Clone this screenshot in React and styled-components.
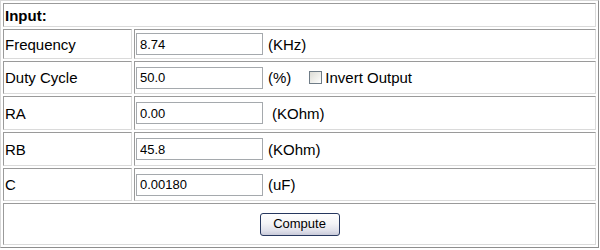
import React from "react";
import styled, { createGlobalStyle } from "styled-components";

const Global = createGlobalStyle`
  html, body { margin: 0; padding: 0; background: #ffffff; }
  body { font-family: "Liberation Sans", Arial, sans-serif; }
`;

const Table = styled.table`
  border-collapse: separate;
  border-spacing: 2px;
  width: 599px;
  box-sizing: border-box;
  border-style: solid;
  border-width: 1px;
  border-color: #d8d8d8 #8e8e8e #8e8e8e #d8d8d8;
  font-family: "Liberation Sans", Arial, sans-serif;
  font-size: 15px;
  color: #000;
`;

const Row = styled.tr`
  height: ${(p) => p.$h}px;
`;

const Cell = styled.td`
  box-sizing: border-box;
  padding: 1px;
  border-style: solid;
  border-width: 1px;
  border-color: #9a9a9a #dadada #dadada #9a9a9a;
  vertical-align: middle;
  white-space: nowrap;
`;

const HeaderCell = styled(Cell)`
  font-weight: bold;
`;

const LabelCell = styled(Cell)`
  width: 129px;
`;

const CenterCell = styled(Cell)`
  text-align: center;
`;

const ValueLine = styled.div`
  display: flex;
  align-items: center;
`;

const Field = styled.input`
  box-sizing: border-box;
  width: 127px;
  height: 22px;
  margin: 0;
  padding: 1px 3px;
  border: 1px solid #a5a9ad;
  font-family: "Liberation Sans", Arial, sans-serif;
  font-size: 13px;
  color: #000;
  background: #fff;
  outline: none;
`;

const Unit = styled.span`
  margin-left: ${(p) => p.$gap}px;
`;

const CheckWrap = styled.label`
  display: inline-flex;
  align-items: center;
  margin-left: 18px;
`;

const Check = styled.input.attrs({ type: "checkbox" })`
  appearance: none;
  box-sizing: border-box;
  width: 13px;
  height: 13px;
  margin: 0 3px 0 0;
  border: 1px solid #6f7c87;
  background: linear-gradient(135deg, #dcdcd6 0%, #f4f4f1 70%, #ffffff 100%);
`;

const Button = styled.button`
  box-sizing: border-box;
  width: 80px;
  height: 23px;
  margin: 0;
  padding: 0 0 1px;
  border: 1px solid #26375e;
  border-radius: 3px;
  background: linear-gradient(180deg, #ffffff 0%, #f4f4f6 45%, #dfe0ea 80%, #c9cad9 100%);
  font-family: "Liberation Sans", Arial, sans-serif;
  font-size: 13px;
  color: #000;
`;

const rows = [
  { label: "Frequency", value: "8.74", unit: "(KHz)", gap: 5, h: 30 },
  { label: "Duty Cycle", value: "50.0", unit: "(%)", gap: 5, h: 33, check: true },
  { label: "RA", value: "0.00", unit: "(KOhm)", gap: 9, h: 34 },
  { label: "RB", value: "45.8", unit: "(KOhm)", gap: 5, h: 34 },
  { label: "C", value: "0.00180", unit: "(uF)", gap: 5, h: 33 },
];

export default function App() {
  return (
    <>
      <Global />
      <Table>
        <tbody>
          <Row $h={24}>
            <HeaderCell colSpan={2}>Input:</HeaderCell>
          </Row>
          {rows.map((r) => (
            <Row key={r.label} $h={r.h}>
              <LabelCell>{r.label}</LabelCell>
              <Cell>
                <ValueLine>
                  <Field defaultValue={r.value} />
                  <Unit $gap={r.gap}>{r.unit}</Unit>
                  {r.check && (
                    <CheckWrap>
                      <Check />
                      Invert Output
                    </CheckWrap>
                  )}
                </ValueLine>
              </Cell>
            </Row>
          ))}
          <Row $h={42}>
            <CenterCell colSpan={2}>
              <Button type="button">Compute</Button>
            </CenterCell>
          </Row>
        </tbody>
      </Table>
    </>
  );
}
